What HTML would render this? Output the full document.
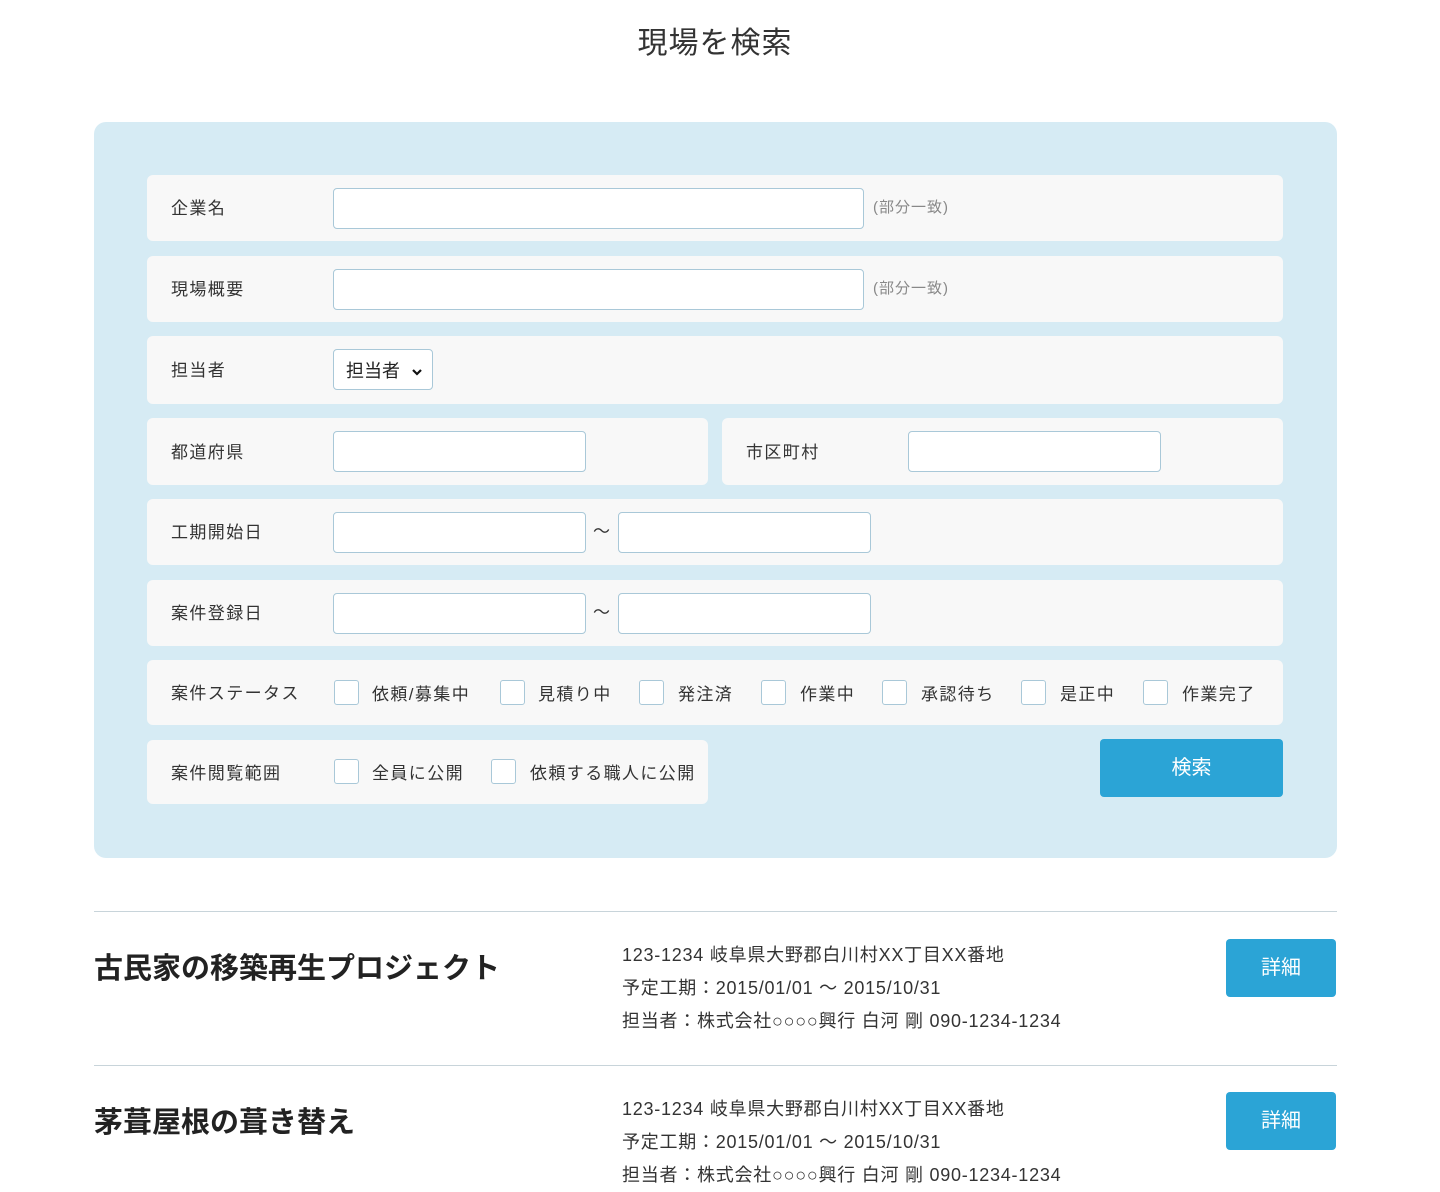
<!DOCTYPE html>
<html><head><meta charset="utf-8"><style>
*{box-sizing:border-box;margin:0;padding:0}
body{width:1440px;height:1190px;overflow:hidden;background:#fff;font-family:"Liberation Sans","Noto Sans CJK JP",sans-serif;color:#333;position:relative}
h1{position:absolute;top:18px;left:0;width:1430px;text-align:center;font-size:30px;font-weight:normal;color:#333;letter-spacing:1px}
.panel{position:absolute;left:94px;top:122px;width:1243px;height:736px;background:#d6ebf4;border-radius:12px}
.row{position:absolute;background:#f8f8f8;border-radius:6px}
.lab{position:absolute;left:24px;font-size:17px;color:#333;letter-spacing:1.4px}
.inp{position:absolute;background:#fff;border:1px solid #a9c8d8;border-radius:4px;height:41px}
.note{position:absolute;font-size:15px;color:#888;letter-spacing:1px}
.cb{position:absolute;width:25px;height:25px;background:#fff;border:1px solid #a9c8d8;border-radius:3px}
.cl{position:absolute;font-size:17px;color:#333;letter-spacing:1.4px}
.btn{position:absolute;background:#2ba4d6;color:#fff;border-radius:4px;text-align:center;font-size:20px}
hr{position:absolute;left:94px;width:1243px;border:0;border-top:1px solid #c8d4da}
.tt{position:absolute;left:94px;font-size:29px;font-weight:bold;color:#222}
.info{position:absolute;left:622px;font-size:18px;line-height:33px;color:#333;letter-spacing:0.75px}
</style></head><body>
<h1>現場を検索</h1>
<div class="panel"></div>

<div class="row" style="left:147px;top:175px;width:1136px;height:66px"><span class="lab" style="top:19px">企業名</span></div>
<div class="inp" style="left:333px;top:188px;width:531px"></div>
<span class="note" style="left:873px;top:196px">(部分一致)</span>

<div class="row" style="left:147px;top:256px;width:1136px;height:66px"><span class="lab" style="top:19px">現場概要</span></div>
<div class="inp" style="left:333px;top:269px;width:531px"></div>
<span class="note" style="left:873px;top:277px">(部分一致)</span>

<div class="row" style="left:147px;top:336px;width:1136px;height:68px"><span class="lab" style="top:20px">担当者</span></div>
<div class="inp" style="left:333px;top:349px;width:100px;font-size:18px;padding:7px 0 0 12px;color:#222">担当者 <svg width="12" height="10" style="margin-left:6px" viewBox="0 0 12 10"><path d="M2 3l4 4 4-4" stroke="#111" stroke-width="2.2" fill="none"/></svg></div>

<div class="row" style="left:147px;top:418px;width:561px;height:67px"><span class="lab" style="top:20px">都道府県</span></div>
<div class="inp" style="left:333px;top:431px;width:253px"></div>
<div class="row" style="left:722px;top:418px;width:561px;height:67px"><span class="lab" style="top:20px">市区町村</span></div>
<div class="inp" style="left:908px;top:431px;width:253px"></div>

<div class="row" style="left:147px;top:499px;width:1136px;height:66px"><span class="lab" style="top:19px">工期開始日</span></div>
<div class="inp" style="left:333px;top:512px;width:253px"></div>
<span class="cl" style="left:593px;top:517px">～</span>
<div class="inp" style="left:618px;top:512px;width:253px"></div>

<div class="row" style="left:147px;top:580px;width:1136px;height:66px"><span class="lab" style="top:19px">案件登録日</span></div>
<div class="inp" style="left:333px;top:593px;width:253px"></div>
<span class="cl" style="left:593px;top:598px">～</span>
<div class="inp" style="left:618px;top:593px;width:253px"></div>

<div class="row" style="left:147px;top:660px;width:1136px;height:65px"><span class="lab" style="top:19px">案件ステータス</span></div>
<div class="cb" style="left:334px;top:680px"></div><span class="cl" style="left:372px;top:680px">依頼/募集中</span>
<div class="cb" style="left:500px;top:680px"></div><span class="cl" style="left:538px;top:680px">見積り中</span>
<div class="cb" style="left:639px;top:680px"></div><span class="cl" style="left:678px;top:680px">発注済</span>
<div class="cb" style="left:761px;top:680px"></div><span class="cl" style="left:800px;top:680px">作業中</span>
<div class="cb" style="left:882px;top:680px"></div><span class="cl" style="left:921px;top:680px">承認待ち</span>
<div class="cb" style="left:1021px;top:680px"></div><span class="cl" style="left:1060px;top:680px">是正中</span>
<div class="cb" style="left:1143px;top:680px"></div><span class="cl" style="left:1182px;top:680px">作業完了</span>

<div class="row" style="left:147px;top:740px;width:561px;height:64px"><span class="lab" style="top:19px">案件閲覧範囲</span></div>
<div class="cb" style="left:334px;top:759px"></div><span class="cl" style="left:372px;top:759px">全員に公開</span>
<div class="cb" style="left:491px;top:759px"></div><span class="cl" style="left:530px;top:759px">依頼する職人に公開</span>
<div class="btn" style="left:1100px;top:739px;width:183px;height:58px;line-height:58px">検索</div>

<hr style="top:911px">
<div class="tt" style="top:945px">古民家の移築再生プロジェクト</div>
<div class="info" style="top:939px">123-1234 岐阜県大野郡白川村XX丁目XX番地<br>予定工期：2015/01/01 ～ 2015/10/31<br>担当者：株式会社○○○○興行 白河 剛 090-1234-1234</div>
<div class="btn" style="left:1226px;top:939px;width:110px;height:58px;line-height:58px">詳細</div>

<hr style="top:1065px">
<div class="tt" style="top:1099px">茅葺屋根の葺き替え</div>
<div class="info" style="top:1093px">123-1234 岐阜県大野郡白川村XX丁目XX番地<br>予定工期：2015/01/01 ～ 2015/10/31<br>担当者：株式会社○○○○興行 白河 剛 090-1234-1234</div>
<div class="btn" style="left:1226px;top:1092px;width:110px;height:58px;line-height:58px">詳細</div>
</body></html>
